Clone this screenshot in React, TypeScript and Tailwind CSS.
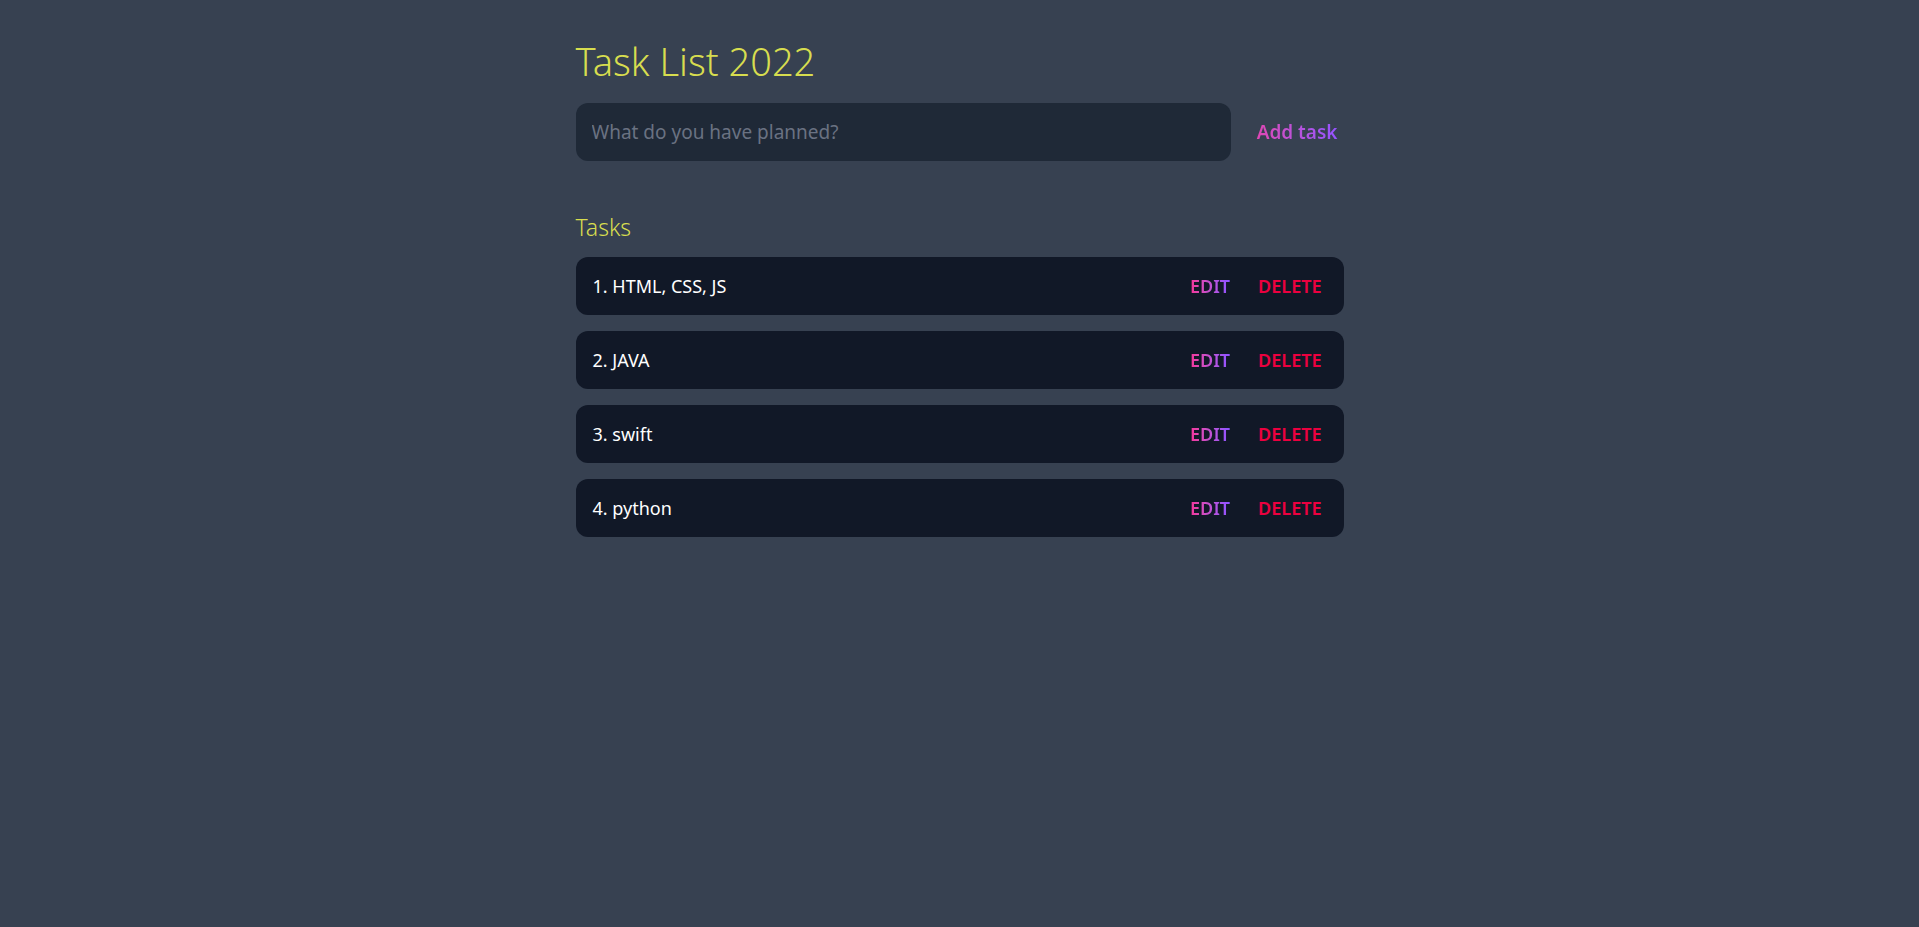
import { useState } from "react"

const font = { fontFamily: '"Noto Sans", "Open Sans", sans-serif' }

const initialTasks = ["HTML, CSS, JS", "JAVA", "swift", "python"]

export default function App() {
  const [tasks] = useState(initialTasks)

  return (
    <div className="min-h-screen bg-[#374151] text-gray-100" style={font}>
      <div className="max-w-3xl mx-auto pt-[36px]">
        <h1 className="text-[38px] leading-[50px] font-light text-[#d7dd4f]">Task List 2022</h1>

        {/* New task */}
        <form className="mt-[17px] flex items-center" onSubmit={(e) => e.preventDefault()}>
          <input
            type="text"
            placeholder="What do you have planned?"
            className="flex-1 h-[58px] px-4 rounded-xl bg-[#1f2937] text-[19px] text-gray-100 placeholder-gray-500 focus:outline-none"
          />
          <button
            type="submit"
            className="pl-[26px] pr-[6px] text-[19px] font-semibold bg-gradient-to-r from-pink-500 to-violet-500 bg-clip-text text-transparent"
          >
            Add task
          </button>
        </form>

        {/* Task list */}
        <h2 className="mt-[49px] text-[23px] font-light text-[#d7dd4f]">Tasks</h2>
        <div className="mt-[12px] space-y-4">
          {tasks.map((task, i) => (
            <div key={i} className="flex justify-between items-center h-[58px] pl-[17px] pr-[22px] rounded-xl bg-[#111827]">
              <span className="text-lg text-white">
                {i + 1}. {task}
              </span>
              <div className="flex gap-7 text-lg font-semibold">
                <button className="bg-gradient-to-r from-pink-500 to-violet-500 bg-clip-text text-transparent">EDIT</button>
                <button className="text-rose-600">DELETE</button>
              </div>
            </div>
          ))}
        </div>
      </div>
    </div>
  )
}
